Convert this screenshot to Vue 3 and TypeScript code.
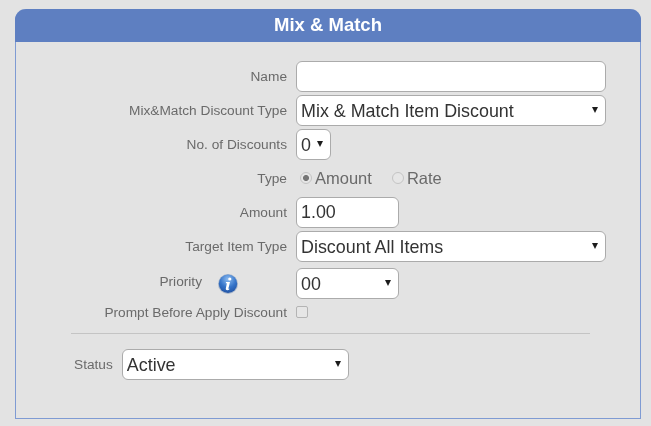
<script setup lang="ts">
import { ref } from 'vue'

const name = ref('')
const discountType = ref('Mix & Match Item Discount')
const discounts = ref('0')
const rateType = ref('amount')
const amount = ref('1.00')
const target = ref('Discount All Items')
const priority = ref('00')
const prompt = ref(false)
const status = ref('Active')
</script>

<template>
  <main class="page">
    <section class="panel">
      <h1 class="title">Mix &amp; Match</h1>
      <form class="body" @submit.prevent>
        <div class="row">
          <label class="label">Name</label>
          <input v-model="name" class="field wide" type="text" />
        </div>
        <div class="row">
          <label class="label">Mix&amp;Match Discount Type</label>
          <div class="select wide">
            <select v-model="discountType" class="field">
              <option>Mix &amp; Match Item Discount</option>
            </select>
          </div>
        </div>
        <div class="row">
          <label class="label">No. of Discounts</label>
          <div class="select tiny">
            <select v-model="discounts" class="field">
              <option>0</option>
            </select>
          </div>
        </div>
        <div class="row">
          <label class="label">Type</label>
          <div class="radios">
            <label class="radio amount-opt">
              <input v-model="rateType" type="radio" value="amount" disabled />
              <span>Amount</span>
            </label>
            <label class="radio">
              <input v-model="rateType" type="radio" value="rate" disabled />
              <span>Rate</span>
            </label>
          </div>
        </div>
        <div class="row">
          <label class="label">Amount</label>
          <input v-model="amount" class="field short" type="text" />
        </div>
        <div class="row">
          <label class="label">Target Item Type</label>
          <div class="select wide">
            <select v-model="target" class="field">
              <option>Discount All Items</option>
            </select>
          </div>
        </div>
        <div class="row priority">
          <div class="label priority-label">
            <label>Priority</label>
            <svg class="info" viewBox="0 0 20 20" aria-hidden="true">
              <defs>
                <radialGradient id="orb" cx="50%" cy="25%" r="80%">
                  <stop offset="0%" stop-color="#8dbcf0" />
                  <stop offset="55%" stop-color="#3574c9" />
                  <stop offset="100%" stop-color="#1f4f9f" />
                </radialGradient>
              </defs>
              <circle cx="10" cy="10" r="10" fill="#a8b6ca" />
              <circle cx="10" cy="9.8" r="9.2" fill="url(#orb)" />
              <path d="M11.8 3.4a1.6 1.6 0 1 1-.01 3.2 1.6 1.6 0 0 1 .01-3.2zM8 8h4l-1.6 6.4c-.1.5.3.6 1 .2l-.2 1c-1.2.7-3.7 1-3.4-1l1.1-5.4-1.1.1z" fill="#fff" />
            </svg>
          </div>
          <div class="select short">
            <select v-model="priority" class="field">
              <option>00</option>
            </select>
          </div>
        </div>
        <div class="row check-row">
          <label class="label">Prompt Before Apply Discount</label>
          <input v-model="prompt" class="check" type="checkbox" />
        </div>
        <hr class="rule" />
        <div class="status-row">
          <label class="status-label">Status</label>
          <div class="select status">
            <select v-model="status" class="field">
              <option>Active</option>
            </select>
          </div>
        </div>
      </form>
    </section>
  </main>
</template>

<style>
html,
body {
  margin: 0;
  background: #e3e3e3;
}
</style>

<style scoped>
.page {
  width: 651px;
  height: 426px;
  box-sizing: border-box;
  padding: 9px 10px 0 15px;
  background: #e3e3e3;
  font-family: "Liberation Sans", Arial, sans-serif;
  overflow: hidden;
  filter: blur(0.4px);
}

.panel {
  height: 410px;
  box-sizing: border-box;
  border: 1px solid #7f9bd3;
  border-top: 0;
  border-radius: 11px 11px 0 0;
}

.title {
  margin: 0 -1px;
  height: 33px;
  background: #5e7fc1;
  border-radius: 11px 11px 0 0;
  color: #fff;
  font-size: 18.5px;
  font-weight: 700;
  line-height: 32px;
  text-align: center;
}

.body {
  padding-top: 19px;
  display: flex;
  flex-direction: column;
}

.row {
  display: grid;
  grid-template-columns: 271px 1fr;
  column-gap: 9px;
  align-items: center;
  height: 30px;
  margin-bottom: 4px;
}

.label {
  text-align: right;
  color: #6a6a6a;
  font-size: 13.7px;
}

.priority {
  margin-top: 3px;
  margin-bottom: 0;
}

.priority-label {
  display: flex;
  justify-content: flex-end;
  align-items: center;
  gap: 16px;
  padding-right: 49px;
}

.priority-label label {
  position: relative;
  top: -2px;
}

.info {
  width: 20px;
  height: 20px;
  flex: none;
}

.check-row {
  height: 28px;
  margin-bottom: 0;
}

.field {
  display: block;
  width: 100%;
  height: 31px;
  box-sizing: border-box;
  margin: 0;
  padding: 0 4px;
  border: 1px solid #ababab;
  border-radius: 6px;
  background: #fff;
  color: #333;
  font-family: inherit;
  font-size: 17.9px;
  outline: none;
  appearance: none;
  -webkit-appearance: none;
}

.wide {
  width: 310px;
}

.short {
  width: 103px;
}

.tiny {
  width: 35px;
}

.status {
  width: 227px;
}

.select {
  position: relative;
}

.select::after {
  content: "";
  position: absolute;
  right: 8px;
  top: 12px;
  border-left: 3.5px solid transparent;
  border-right: 3.5px solid transparent;
  border-top: 6px solid #1c1c1c;
  pointer-events: none;
}

.radios {
  display: flex;
  align-items: center;
  padding-left: 4px;
  color: #6a6a6a;
  font-size: 16.5px;
}

.radio {
  display: flex;
  align-items: center;
  gap: 3px;
}

.amount-opt {
  margin-right: 20px;
}

.radio input {
  appearance: none;
  -webkit-appearance: none;
  width: 12px;
  height: 12px;
  box-sizing: border-box;
  margin: 0;
  border: 1px solid #c4c4c4;
  border-radius: 50%;
  background: #e6e6e6;
}

.radio input:checked {
  background: radial-gradient(circle, #767676 0 2.6px, #e6e6e6 3.4px);
}

.check {
  appearance: none;
  -webkit-appearance: none;
  width: 12px;
  height: 12px;
  box-sizing: border-box;
  margin: 0;
  border: 1px solid #b4b4b4;
  border-radius: 2px;
  background: #e6e6e6;
}

.rule {
  width: 519px;
  margin: 7px 0 15px 55px;
  height: 0;
  border: 0;
  border-top: 1px solid #c4c4c4;
}

.status-row {
  display: flex;
  align-items: center;
  gap: 9px;
  padding-left: 58px;
}

.status-label {
  color: #6a6a6a;
  font-size: 13.7px;
}
</style>
